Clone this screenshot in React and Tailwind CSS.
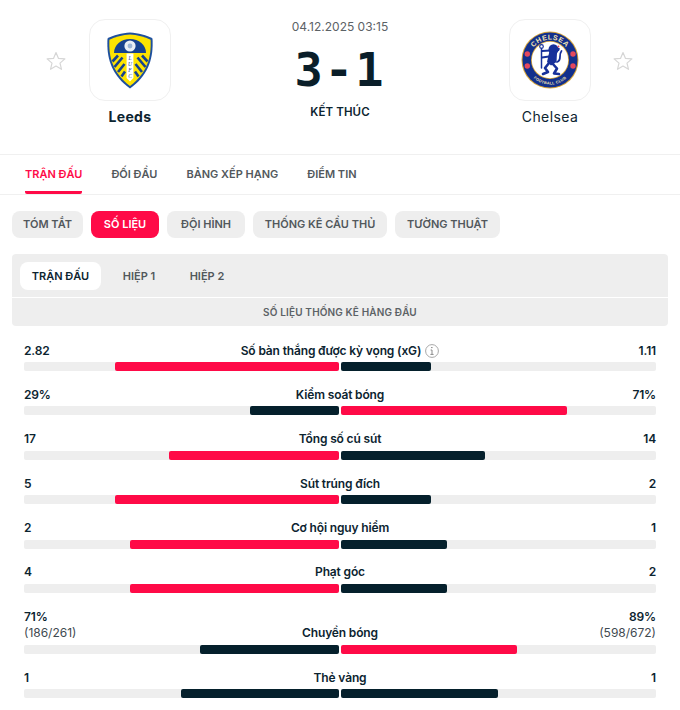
import React from "react";

const mainTabs = ["TRẬN ĐẤU", "ĐỐI ĐẦU", "BẢNG XẾP HẠNG", "ĐIỂM TIN"];
const chips = [
  { label: "TÓM TẮT", width: "w-[71px]" },
  { label: "SỐ LIỆU", width: "w-[68px]" },
  { label: "ĐỘI HÌNH", width: "w-[78px]" },
  { label: "THỐNG KÊ CẦU THỦ", width: "w-[134px]" },
  { label: "TƯỜNG THUẬT", width: "w-[105px]" },
];
const periods = [
  { label: "TRẬN ĐẤU", width: "w-[81px]" },
  { label: "HIỆP 1", width: "w-[60px]" },
  { label: "HIỆP 2", width: "w-[60px]" },
];

// lw/rw = share of half bar, win = which side is red
const stats = [
  { name: "Số bàn thắng được kỳ vọng (xG)", l: "2.82", r: "1.11", lw: 71.2, rw: 28.7, win: "l", info: true },
  { name: "Kiểm soát bóng", l: "29%", r: "71%", lw: 28.3, rw: 71.8, win: "r" },
  { name: "Tổng số cú sút", l: "17", r: "14", lw: 54, rw: 45.7, win: "l" },
  { name: "Sút trúng đích", l: "5", r: "2", lw: 71.2, rw: 28.7, win: "l" },
  { name: "Cơ hội nguy hiểm", l: "2", r: "1", lw: 66.2, rw: 33.6, win: "l" },
  { name: "Phạt góc", l: "4", r: "2", lw: 66.2, rw: 33.6, win: "l" },
  { name: "Chuyền bóng", l: "71%", r: "89%", ls: "(186/261)", rs: "(598/672)", lw: 44.2, rw: 55.8, win: "r" },
  { name: "Thẻ vàng", l: "1", r: "1", lw: 50.3, rw: 49.8, win: "n" },
];

function Star() {
  return (
    <svg width="20" height="20" viewBox="0 0 20 20" className="mt-[32px] shrink-0">
      <path
        d="M10 1.5l2.5 5.9 6.4.5-4.9 4.2 1.5 6.2L10 15.1l-5.5 3.2L6 12.1 1.1 7.9l6.4-.5z"
        fill="none"
        stroke="#d6d6d6"
        strokeWidth="1.2"
        strokeLinejoin="round"
      />
    </svg>
  );
}

function LeedsBadge() {
  return (
    <svg width="46" height="57" viewBox="0 0 46 57">
      <path d="M23 .5C31 1 40 3 45.5 6.5 46.5 24 43 42 23 56.5 3 42-.5 24 .5 6.5 6 3 15 1 23 .5Z" fill="#1d4f9e" />
      <path d="M23 2.5C30 3 38 4.8 43.6 7.8 44.4 24 41 40.5 23 54 5 40.5 1.6 24 2.4 7.8 8 4.8 16 3 23 2.5Z" fill="#fde300" />
      <path d="M7 21C7 13 14 7 23 7S39 13 39 21Z" fill="#17428f" />
      <circle cx="23" cy="14" r="5.6" fill="#e9eef5" />
      <circle cx="23" cy="14" r="2.4" fill="#9db6d6" />
      <path d="M19.6 21.5h6.8V46L23 49.5 19.6 46Z" fill="#ffffff" />
      <text x="23" y="28" textAnchor="middle" fontSize="5.5" fontStyle="italic" fontFamily="Liberation Serif, serif" fill="#17428f">L</text>
      <text x="23" y="34" textAnchor="middle" fontSize="5.5" fontStyle="italic" fontFamily="Liberation Serif, serif" fill="#17428f">U</text>
      <text x="23" y="40" textAnchor="middle" fontSize="5.5" fontStyle="italic" fontFamily="Liberation Serif, serif" fill="#17428f">F</text>
      <text x="23" y="46" textAnchor="middle" fontSize="5.5" fontStyle="italic" fontFamily="Liberation Serif, serif" fill="#17428f">C</text>
      <g stroke="#17428f" strokeWidth="2.6" fill="none">
        <path d="M5.5 29.5 11 23.5M7.5 35 15.5 25.5M11 40 17.5 32M14.5 44.5 18 39.5" />
        <path d="M40.5 29.5 35 23.5M38.5 35 30.5 25.5M35 40 28.5 32M31.5 44.5 28 39.5" />
      </g>
    </svg>
  );
}

function ChelseaBadge() {
  return (
    <svg width="58" height="58" viewBox="0 0 58 58">
      <circle cx="29" cy="29" r="28.5" fill="#d8a63a" />
      <circle cx="29" cy="29" r="27.5" fill="#12308c" />
      <circle cx="29" cy="29" r="19" fill="#d8a63a" />
      <circle cx="29" cy="29" r="18.2" fill="#ffffff" />
      <defs>
        <path id="chelsea-top" d="M8.5 29a20.5 20.5 0 0 1 41 0" />
        <path id="chelsea-bottom" d="M4.5 29a24.5 24.5 0 0 0 49 0" />
      </defs>
      <text fontSize="7" fontWeight="700" fontFamily="Liberation Sans, sans-serif" fill="#f4e3b0" letterSpacing=".6">
        <textPath href="#chelsea-top" startOffset="50%" textAnchor="middle">CHELSEA</textPath>
      </text>
      <text fontSize="3.8" fontWeight="700" fontFamily="Liberation Sans, sans-serif" fill="#f4e3b0" letterSpacing=".3">
        <textPath href="#chelsea-bottom" startOffset="50%" textAnchor="middle">FOOTBALL CLUB</textPath>
      </text>
      <circle cx="6.3" cy="23" r="2.7" fill="#e4485d" />
      <circle cx="52" cy="23" r="2.7" fill="#e4485d" />
      <circle cx="6.3" cy="35" r="2.7" fill="#e4485d" />
      <circle cx="52" cy="35" r="2.7" fill="#e4485d" />
      {/* lion with staff */}
      <g fill="none" stroke="#17309a" strokeLinecap="round" strokeLinejoin="round">
        <circle cx="20.5" cy="15.5" r="1.8" strokeWidth="1.2" />
        <path d="M20.5 17.5V37" strokeWidth="1.5" />
        <path d="M29 19.5 21 20M28 25.5 21 26.5" strokeWidth="2.2" />
        <path d="M31 32 36 37.5 33 42.5 38 43" strokeWidth="2.6" />
        <path d="M28 32 24 37 27 41 22 43" strokeWidth="2.6" />
        <path d="M36 31C41.5 29 37 24.5 40.5 20" strokeWidth="1.8" />
      </g>
      <ellipse cx="32.5" cy="18.5" rx="5" ry="5.2" fill="#17309a" />
      <path d="M28.5 20 36 21.5 35.5 31 30 34.5 26 31Z" fill="#17309a" />
      <path d="M36.5 16.5l2.5 1-1 2.5-2 .2Z" fill="#17309a" />
      <circle cx="37.5" cy="15.5" r=".9" fill="#e4485d" />
    </svg>
  );
}

function Team({ name, bold, children }) {
  return (
    <div className="flex flex-col items-center w-[82px]">
      <div className="w-[82px] h-[82px] rounded-[16px] border border-[#f0f0f0] flex items-center justify-center">
        {children}
      </div>
      <div className={`mt-[7px] text-[14px] leading-[18px] text-[#0c2430] whitespace-nowrap ${bold ? "font-bold tracking-[.3px]" : "font-normal tracking-[.4px]"}`}>
        {name}
      </div>
    </div>
  );
}

function StatRow({ s }) {
  return (
    <div>
      <div className="flex items-end justify-between text-[12px] leading-[16px] tracking-[-.15px] text-[#0c2430] font-semibold">
        <div className="w-[80px]">
          <div>{s.l}</div>
          {s.ls && <div className="font-normal tracking-normal text-[#3f4a50] whitespace-nowrap">{s.ls}</div>}
        </div>
        <div className="flex items-center gap-[4px] whitespace-nowrap">
          {s.name}
          {s.info && (
            <svg width="14" height="14" viewBox="0 0 14 14">
              <circle cx="7" cy="7" r="6.4" fill="none" stroke="#a8a8a8" strokeWidth="1" />
              <path d="M6 3.6h1.6M7 6v4.4M5.6 6h1.4M5.4 10.4h3.2" fill="none" stroke="#8a8a8a" strokeWidth="1" />
            </svg>
          )}
        </div>
        <div className="w-[80px] text-right">
          <div>{s.r}</div>
          {s.rs && <div className="font-normal tracking-normal text-[#3f4a50] whitespace-nowrap">{s.rs}</div>}
        </div>
      </div>
      <div className={`${s.ls ? "mt-[4.1px]" : "mt-[3.5px]"} flex gap-[2px] h-[9px]`}>
        <div className="flex-1 flex justify-end bg-[#eeeeee] rounded-[2px]">
          <div
            className={`h-full rounded-[2px] ${s.win === "l" ? "bg-[#ff0a47]" : "bg-[#05202c]"}`}
            style={{ width: `${s.lw}%` }}
          />
        </div>
        <div className="flex-1 flex justify-start bg-[#eeeeee] rounded-[2px]">
          <div
            className={`h-full rounded-[2px] ${s.win === "r" ? "bg-[#ff0a47]" : "bg-[#05202c]"}`}
            style={{ width: `${s.rw}%` }}
          />
        </div>
      </div>
    </div>
  );
}

export default function App() {
  return (
    <div className="w-[680px] h-[710px] overflow-hidden bg-white font-['Inter','Noto_Sans',sans-serif]">
      {/* match header */}
      <div className="h-[155px] border-b border-[#f0f0f0] pt-[19px] pl-[46px] pr-[47px] flex">
        <div className="flex gap-[23px]">
          <Star />
          <Team name="Leeds" bold>
            <LeedsBadge />
          </Team>
        </div>
        <div className="flex-1 flex flex-col items-center">
          <div className="text-[12px] leading-[16px] text-[#5c6266]">04.12.2025 03:15</div>
          <div className="mt-[11px] h-[48px] text-[47px] leading-[48px] font-bold tracking-[2px] text-[#0a1e29] font-['DejaVu_Sans_Mono',monospace]">
            3-1
          </div>
          <div className="mt-[10px] text-[11.5px] leading-[16px] font-semibold tracking-[.1px] text-[#0c2430]">KẾT THÚC</div>
        </div>
        <div className="flex gap-[22px]">
          <Team name="Chelsea">
            <ChelseaBadge />
          </Team>
          <Star />
        </div>
      </div>

      {/* main tabs */}
      <div className="h-[40px] border-b border-[#f0f0f0] px-[25px] flex gap-[29px]">
        {mainTabs.map((t, i) => (
          <div
            key={t}
            className={`h-[39px] pt-[11px] text-[11px] leading-[16px] font-semibold whitespace-nowrap ${
              i === 0 ? "text-[#ff0a47] border-b-[3px] border-[#ff0a47] rounded-b-[2px]" : "text-[#52585c]"
            }`}
          >
            {t}
          </div>
        ))}
      </div>

      {/* section chips */}
      <div className="mt-[16px] px-[12px] flex gap-[8px]">
        {chips.map((c) => (
          <div
            key={c.label}
            className={`h-[27px] ${c.width} rounded-[8px] flex items-center justify-center text-[11px] font-semibold whitespace-nowrap ${
              c.label === "SỐ LIỆU" ? "bg-[#ff0a47] text-white" : "bg-[#eeeeee] text-[#52585c]"
            }`}
          >
            {c.label}
          </div>
        ))}
      </div>

      {/* period tabs */}
      <div className="mt-[16px] mx-[12px] h-[43px] bg-[#eeeeee] rounded-t-[4px] pt-[8px] px-[8px] flex gap-[8px]">
        {periods.map((p, i) => (
          <div
            key={p.label}
            className={`h-[28px] ${p.width} rounded-[8px] flex items-center justify-center text-[11px] font-semibold whitespace-nowrap ${
              i === 0 ? "bg-white text-[#0c2430]" : "text-[#52585c]"
            }`}
          >
            {p.label}
          </div>
        ))}
      </div>
      <div className="mt-[1px] mx-[12px] h-[28px] bg-[#eeeeee] rounded-b-[4px] flex items-center justify-center text-[10px] font-semibold tracking-[.15px] text-[#5c6266]">
        SỐ LIỆU THỐNG KÊ HÀNG ĐẦU
      </div>

      {/* stats */}
      <div className="pt-[16.5px] px-[24px] flex flex-col gap-[15.9px]">
        {stats.map((s) => (
          <StatRow key={s.name} s={s} />
        ))}
      </div>
    </div>
  );
}
